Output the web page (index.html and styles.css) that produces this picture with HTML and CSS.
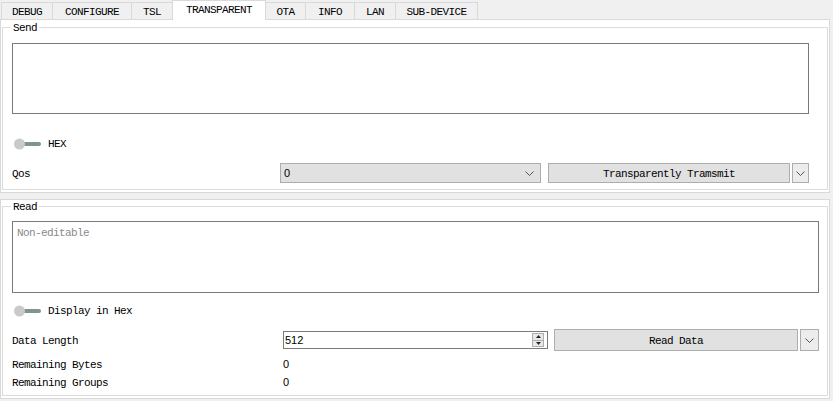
FILE: index.html
```html
<!DOCTYPE html>
<html>
<head>
<meta charset="utf-8">
<link rel="stylesheet" href="styles.css">
</head>
<body>
<div class="tabs">
  <div class="tab t1">DEBUG</div>
  <div class="tab t2">CONFIGURE</div>
  <div class="tab t3">TSL</div>
  <div class="tab t4 active">TRANSPARENT</div>
  <div class="tab t5">OTA</div>
  <div class="tab t6">INFO</div>
  <div class="tab t7">LAN</div>
  <div class="tab t8">SUB-DEVICE</div>
</div>
<div class="frames">
  <div class="frame send-frame">
    <fieldset class="group send-group">
      <legend>Send</legend>
      <div class="textbox send-box"></div>
      <div class="toggle-row">
        <svg class="toggle" width="27" height="12" viewBox="0 0 27 12"><rect x="4" y="4" width="23" height="4" rx="2" fill="#7f9393"/><circle cx="5.5" cy="6" r="5.5" fill="#cacaca"/></svg>
        <span>HEX</span>
      </div>
      <div class="form-row send-row">
        <span class="lbl qos-lbl">Qos</span>
        <div class="combo"><span class="num">0</span><svg class="chev" width="9" height="5" viewBox="0 0 9 5"><path d="M0.5 0.5 L4.5 4.5 L8.5 0.5" fill="none" stroke="#555" stroke-width="1"/></svg></div>
        <div class="btn send-btn">Transparently Tramsmit</div>
        <div class="btn drop send-drop"><svg width="9" height="5" viewBox="0 0 9 5"><path d="M0.5 0.5 L4.5 4.5 L8.5 0.5" fill="none" stroke="#555" stroke-width="1"/></svg></div>
      </div>
    </fieldset>
  </div>
  <div class="frame read-frame">
    <fieldset class="group read-group">
      <legend>Read</legend>
      <div class="textbox read-box"><span class="placeholder">Non-editable</span></div>
      <div class="toggle-row read-toggle">
        <svg class="toggle" width="27" height="12" viewBox="0 0 27 12"><rect x="4" y="4" width="23" height="4" rx="2" fill="#7f9393"/><circle cx="5.5" cy="6" r="5.5" fill="#cacaca"/></svg>
        <span>Display in Hex</span>
      </div>
      <div class="form-row read-row">
        <span class="lbl len-lbl">Data Length</span>
        <div class="spin"><span class="num">512</span>
          <div class="spin-btns">
            <div class="arrow"><svg width="5" height="3" viewBox="0 0 5 3"><path d="M0 3 L2.5 0 L5 3 Z" fill="#222"/></svg></div>
            <div class="arrow"><svg width="5" height="3" viewBox="0 0 5 3"><path d="M0 0 L2.5 3 L5 0 Z" fill="#222"/></svg></div>
          </div>
        </div>
        <div class="btn read-btn">Read Data</div>
        <div class="btn drop read-drop"><svg width="9" height="5" viewBox="0 0 9 5"><path d="M0.5 0.5 L4.5 4.5 L8.5 0.5" fill="none" stroke="#555" stroke-width="1"/></svg></div>
      </div>
      <div class="info-row first">
        <span class="lbl len-lbl">Remaining Bytes</span><span class="num val">0</span>
      </div>
      <div class="info-row">
        <span class="lbl len-lbl">Remaining Groups</span><span class="num val">0</span>
      </div>
    </fieldset>
  </div>
</div>
</body>
</html>
```
FILE: styles.css
```css
* { box-sizing: border-box; }
html, body { margin: 0; padding: 0; }
body {
  width: 833px;
  height: 401px;
  overflow: hidden;
  background: #f0f0f0;
  font-family: "Liberation Mono", "DejaVu Sans Mono", monospace;
  font-size: 11px;
  letter-spacing: -0.6px;
  color: #000;
}
.tabs {
  display: flex;
  align-items: flex-end;
  height: 19px;
  padding-left: 1px;
}
.tab {
  height: 17px;
  border: 1px solid #d9d9d9;
  border-bottom: none;
  margin-left: -1px;
  background: #f0f0f0;
  display: flex;
  align-items: center;
  justify-content: center;
  padding-top: 2px;
  line-height: 12px;
}
.tab:first-child { margin-left: 0; }
.t1 { width: 52px; }
.t2 { width: 80px; }
.t3 { width: 42px; }
.t4 { width: 94px; }
.t5 { width: 41px; }
.t6 { width: 50px; }
.t7 { width: 42px; }
.t8 { width: 83px; }
.tab.active {
  height: 20px;
  background: #fff;
  margin-bottom: -1px;
  position: relative;
  z-index: 2;
  align-items: flex-start;
  padding-top: 3px;
}
.frames {
  display: flex;
  flex-direction: column;
  gap: 6px;
  width: 830px;
}
.frame {
  background: #fff;
  border: 1px solid #d9d9d9;
  padding: 0 1px;
}
.send-frame { height: 174px; padding-top: 1px; padding-bottom: 2px; }
.read-frame { height: 200px; padding-bottom: 2px; }
.group {
  margin: 0;
  padding: 0 0 6px 0;
  border: 1px solid #dcdcdc;
  min-width: 0;
}
.group legend {
  margin-left: 8px;
  padding: 1px 2px 0;
  line-height: 12px;
  height: 12px;
}
.textbox {
  margin-left: 9px;
  border: 1px solid #7a7a7a;
  background: #fff;
}
.send-box { margin-top: 10px; width: 797px; height: 71px; }
.read-box { margin-top: 9px; width: 807px; height: 72px; padding: 5px 0 0 4px; }
.placeholder { color: #8a8a8a; line-height: 12px; }
.toggle-row {
  display: flex;
  align-items: center;
  gap: 7px;
  height: 12px;
  margin-top: 24px;
  margin-left: 11px;
  line-height: 12px;
}
.read-toggle { margin-top: 12px; }
.form-row {
  display: flex;
  align-items: center;
  margin-left: 9px;
}
.send-row { margin-top: 13px; height: 20px; }
.read-row { margin-top: 12px; height: 22px; }
.lbl { flex: none; line-height: 12px; padding-top: 1px; }
.qos-lbl { width: 268px; }
.len-lbl { width: 271px; }
.num {
  font-family: "Liberation Sans", Arial, sans-serif;
  font-size: 11px;
  letter-spacing: 0;
}
.combo {
  width: 261px;
  height: 20px;
  background: #e1e1e1;
  border: 1px solid #adadad;
  display: flex;
  align-items: center;
  justify-content: space-between;
  padding: 0 6px 0 3px;
}
.btn {
  height: 20px;
  background: #e1e1e1;
  border: 1px solid #adadad;
  display: flex;
  align-items: center;
  justify-content: center;
  line-height: 12px;
  padding-top: 1px;
}
.send-btn { width: 242px; margin-left: 7px; }
.drop { margin-left: 2px; background: #ececec; padding-top: 0; }
.send-drop { width: 17px; }
.spin {
  width: 265px;
  height: 18px;
  border: 1px solid #7a7a7a;
  display: flex;
  align-items: center;
  justify-content: space-between;
  padding: 0 3px 0 1px;
  background: #fff;
}
.spin-btns {
  width: 12px;
  height: 14px;
  border: 1px solid #adadad;
  background: #e8e8e8;
  display: flex;
  flex-direction: column;
}
.arrow {
  flex: 1;
  display: flex;
  align-items: center;
  justify-content: center;
}
.arrow:first-child { border-bottom: 1px solid #adadad; }
.read-btn { width: 244px; height: 22px; margin-left: 6px; }
.read-drop { width: 19px; height: 22px; }
.info-row {
  display: flex;
  align-items: center;
  height: 14px;
  margin-left: 9px;
  margin-top: 4px;
}
.info-row.first { margin-top: 6px; }
```
